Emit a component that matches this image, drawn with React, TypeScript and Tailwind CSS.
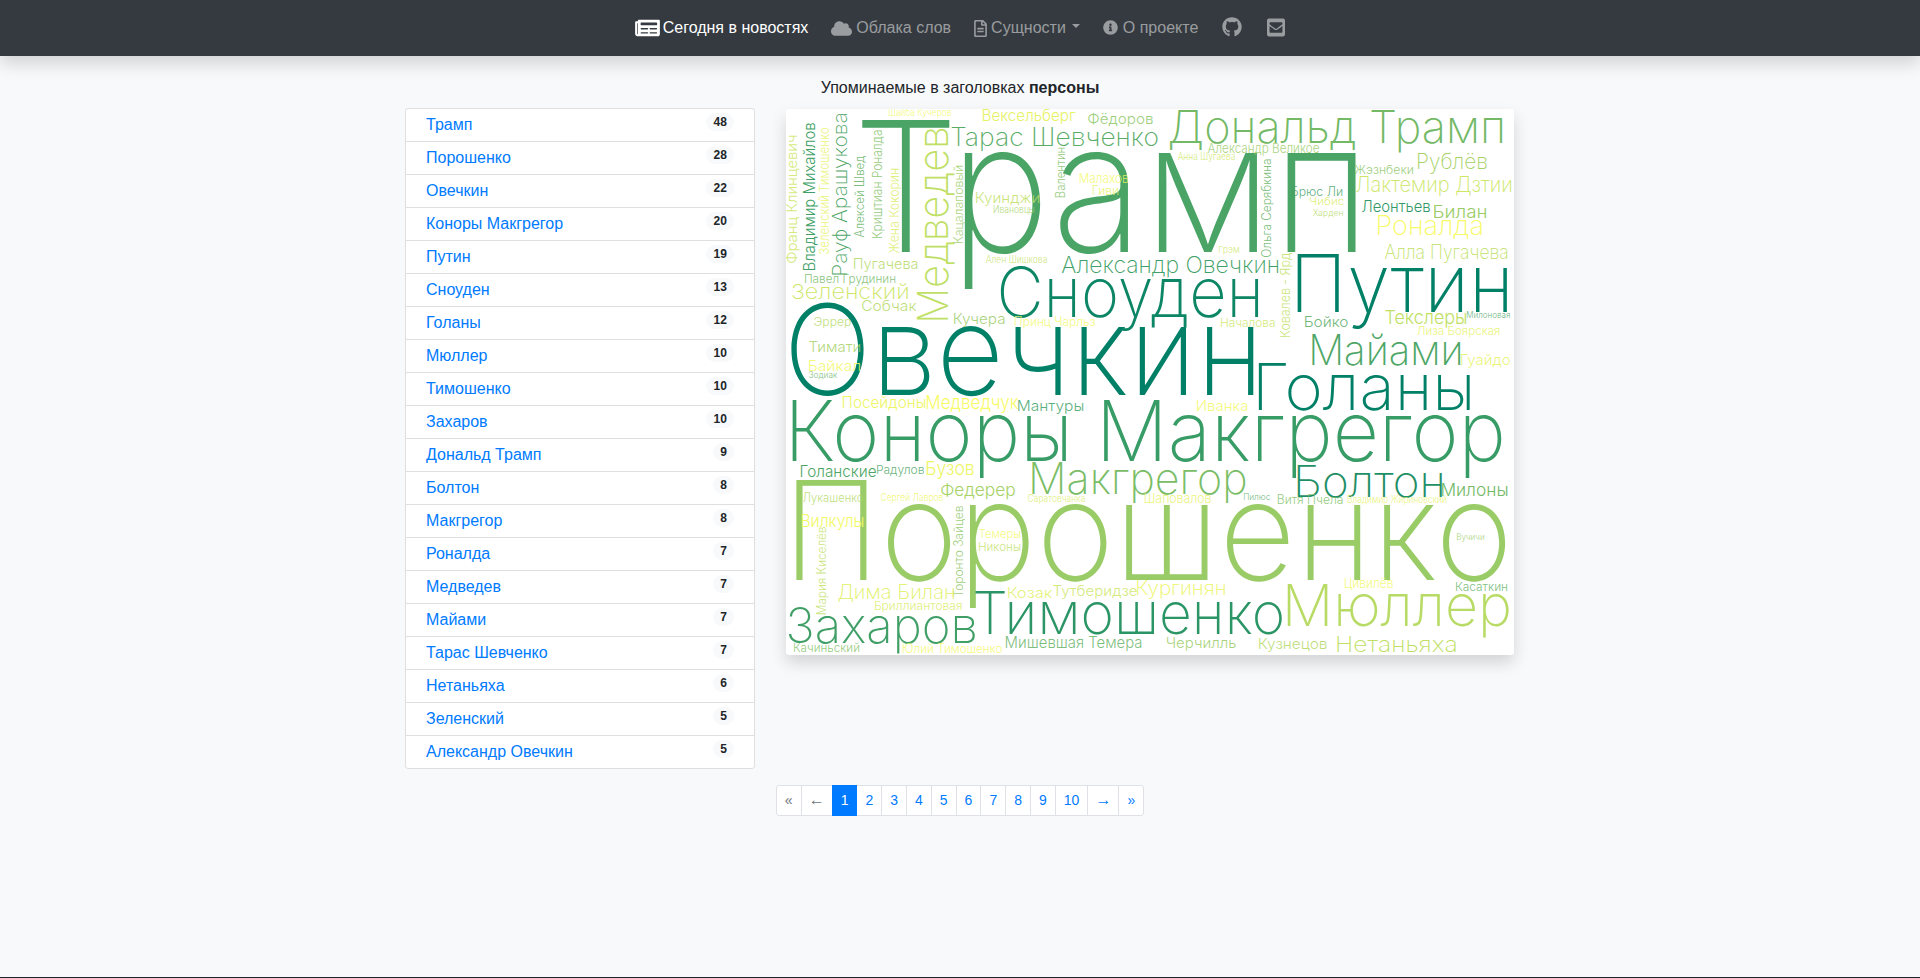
import React from "react";
import { FaNewspaper, FaCloud, FaRegFileAlt, FaInfoCircle, FaGithub, FaEnvelopeSquare } from "react-icons/fa";

const people: [string, number][] = [
  ["Трамп", 48], ["Порошенко", 28], ["Овечкин", 22], ["Коноры Макгрегор", 20], ["Путин", 19],
  ["Сноуден", 13], ["Голаны", 12], ["Мюллер", 10], ["Тимошенко", 10], ["Захаров", 10],
  ["Дональд Трамп", 9], ["Болтон", 8], ["Макгрегор", 8], ["Роналда", 7], ["Медведев", 7],
  ["Майами", 7], ["Тарас Шевченко", 7], ["Нетаньяха", 6], ["Зеленский", 5], ["Александр Овечкин", 5],
];

// text, x, baseline, size, length, t (summer colormap position), vertical
type W = [string, number, number, number, number, number, boolean?];
const words: W[] = [
  ["Трамп", 858, 252, 185, 497, 0.29],
  ["Овечкин", 790, 395, 128, 463, 0],
  ["Порошенко", 795, 580, 140, 713, 0.6],
  ["Коноры Макгрегор", 792, 461, 85, 711, 0.22],
  ["Сноуден", 1000, 317, 70, 258, 0.05],
  ["Путин", 1297, 312, 82, 210, 0],
  ["Голаны", 1258, 410, 66, 212, 0],
  ["Тимошенко", 974, 634, 60, 309, 0.17],
  ["Захаров", 788, 643, 50, 188, 0.25],
  ["Мюллер", 1287, 626, 59, 223, 0.72],
  ["Макгрегор", 1032, 494, 44, 214, 0.48],
  ["Болтон", 1297, 497, 44, 145, 0.12],
  ["Майами", 1312, 365, 43, 148, 0.3],
  ["Дональд Трамп", 1169, 143, 46, 333, 0.45],
  ["Тарас Шевченко", 951, 146, 26, 207, 0.35],
  ["Медведев", 948, 320, 43, 192, 0.75, true],
  ["Рауф Арашукова", 847, 275, 20, 162, 0.3, true],
  ["Владимир Михайлов", 815, 270, 16, 147, 0.25, true],
  ["Франц Клинцевич", 797, 263, 15, 128, 0.8, true],
  ["Зеленский Тимошенко", 829, 254, 13.5, 126, 0.9, true],
  ["Алексей Швед", 864, 237, 13, 81, 0.4, true],
  ["Криштиан Роналда", 882, 238, 13.5, 108, 0.5, true],
  ["Жена Кокорин", 899, 253, 13.5, 84, 0.85, true],
  ["Кацалаповый", 963, 243, 13, 77, 0.6, true],
  ["Валентин", 1065, 197, 13, 49, 0.5, true],
  ["Шайба Кучеров", 889, 116, 10, 62, 0.95],
  ["Вексельберг", 983, 121, 16, 92, 0.9],
  ["Фёдоров", 1088, 124, 15, 65, 0.55],
  ["Куинджи", 976, 203, 15, 63, 0.75],
  ["Ивановцы", 994, 213, 10, 40, 0.65],
  ["Малахов", 1080, 183, 13.5, 48, 0.95],
  ["Гиви", 1093, 195, 13, 25, 0.9],
  ["Ален Шишкова", 986, 263, 10, 61, 0.75],
  ["Александр Овечкин", 1062, 273, 23, 216, 0.25],
  ["Пугачева", 854, 269, 15, 64, 0.7],
  ["Павел Грудинин", 805, 283, 12, 90, 0.45],
  ["Зеленский", 792, 299, 21, 116, 0.8],
  ["Собчак", 862, 311, 15, 54, 0.7],
  ["Эррер", 814, 326, 12, 37, 0.7],
  ["Кучера", 954, 324, 15, 51, 0.6],
  ["Принц Чарльз", 1015, 326, 13, 80, 0.95],
  ["Александр Великое", 1208, 153, 14, 111, 0.6],
  ["Анна Шугаева", 1178, 160, 10.5, 57, 0.8],
  ["Рублёв", 1418, 169, 22, 69, 0.65],
  ["Жэзнбеки", 1355, 174, 12, 58, 0.55],
  ["Лактемир Дзтии", 1356, 192, 22, 155, 0.8],
  ["Брюс Ли", 1292, 196, 13, 50, 0.25],
  ["Чибис", 1310, 205, 11, 34, 0.85],
  ["Харден", 1313, 216, 9, 30, 0.7],
  ["Леонтьев", 1362, 212, 16, 68, 0.2],
  ["Билан", 1434, 218, 17, 52, 0.6],
  ["Роналда", 1378, 235, 27, 105, 0.97],
  ["Алла Пугачева", 1385, 259, 20, 123, 0.75],
  ["Грэм", 1219, 253, 9.5, 20, 0.8],
  ["Ольга Серябкина", 1271, 257, 13, 98, 0.4, true],
  ["Ковалев - Ярд", 1290, 337, 13.5, 84, 0.75, true],
  ["Началова", 1221, 327, 12.5, 54, 0.8],
  ["Бойко", 1305, 327, 15, 43, 0.35],
  ["Текслеры", 1385, 324, 19, 81, 0.75],
  ["Милоновая", 1467, 318, 9, 43, 0.3],
  ["Лиза Боярская", 1417, 335, 12.5, 83, 0.9],
  ["Гуайдо", 1461, 365, 15, 49, 0.9],
  ["Иванка", 1197, 411, 15, 51, 0.95],
  ["Милоны", 1442, 496, 18, 65, 0.45],
  ["Шаповалов", 1145, 503, 13.5, 66, 0.9],
  ["Пилюс", 1244, 500, 9, 26, 0.35],
  ["Витя Пчела", 1278, 504, 13, 65, 0.5],
  ["Владимир Жириновский", 1348, 503, 10, 98, 0.9],
  ["Вучичи", 1457, 540, 9, 27, 0.6],
  ["Тимати", 809, 352, 15, 51, 0.65],
  ["Байкал", 809, 371, 15, 51, 0.95],
  ["Зодиак", 809, 378, 9, 28, 0.4],
  ["Посейдоны", 843, 408, 16, 82, 0.93],
  ["Медведчук", 927, 409, 19, 91, 0.97],
  ["Мантуры", 1018, 411, 15, 65, 0.25],
  ["Голанские", 801, 477, 16, 75, 0.3],
  ["Радулов", 877, 474, 12.5, 47, 0.3],
  ["Бузов", 927, 475, 19, 47, 0.93],
  ["Федерер", 941, 496, 17.5, 74, 0.65],
  ["Лукашенко", 803, 502, 13, 60, 0.7],
  ["Сергей Лавров", 881, 501, 10.5, 62, 0.93],
  ["Саратовчанка", 1028, 502, 10, 57, 0.85],
  ["Вилкулы", 802, 527, 17, 61, 0.95],
  ["Мария Киселёв", 826, 614, 13, 87, 0.75, true],
  ["Торонто Зайцев", 963, 597, 13, 91, 0.55, true],
  ["Темеры", 979, 538, 12.5, 41, 0.95],
  ["Никоны", 979, 551, 12.5, 41, 0.75],
  ["Дима Билан", 838, 599, 20, 116, 0.88],
  ["Козак", 1008, 598, 15, 44, 0.88],
  ["Тутберидзе", 1053, 596, 15, 84, 0.8],
  ["Кургинян", 1137, 595, 20, 88, 0.92],
  ["Бриллиантовая", 875, 610, 12.5, 87, 0.85],
  ["Мишевшая Темера", 1006, 648, 15.5, 136, 0.4],
  ["Качиньский", 794, 652, 12, 65, 0.5],
  ["Юлий Тимошенко", 903, 653, 13, 99, 0.95],
  ["Черчилль", 1167, 648, 15, 69, 0.6],
  ["Кузнецов", 1259, 649, 15, 68, 0.7],
  ["Нетаньяха", 1337, 652, 22, 120, 0.75],
  ["Цивилёв", 1345, 588, 13.5, 48, 0.95],
  ["Касаткин", 1456, 591, 12.5, 51, 0.4],
];

const shade = (t: number) =>
  `rgb(${Math.round(t * 255)},${Math.round((0.5 + 0.5 * t) * 255)},102)`;

// The measured boxes are of the ink; the glyphs have side bearings beyond it.
const leftBearing = (s: string) =>
  "ПКГБМРНВЕШЧЦИЮ".includes(s[0]) ? 0.09 : "ОСЗЭФ".includes(s[0]) ? 0.05 : 0.03;
const rightBearing = (s: string) =>
  "пнимыцшлй".includes(s[s.length - 1]) ? 0.085 : 0.035;

function WordCloud() {
  return (
    <svg
      viewBox="786 109 728 546"
      className="mt-px block h-[546px] w-[728px] rounded-[3px] bg-white shadow-[0_8px_16px_rgba(0,0,0,0.15)]"
      style={{ fontFamily: "Inter, 'Liberation Sans', sans-serif" }}
    >
      {words.map(([text, x, y, size, len, t, vertical]) => {
        const l = leftBearing(text) * size;
        const r = rightBearing(text) * size;
        const px = vertical ? x : x - l;
        const py = vertical ? y + l : y;
        return (
          <text
            key={text + x}
            x={px}
            y={py}
            fontSize={size * 0.98}
            fontWeight={size < 20 ? 300 : 250}
            fill={shade(t)}
            fillOpacity={size < 16 ? 0.85 : 1}
            textLength={len + l + r}
            lengthAdjust="spacingAndGlyphs"
            transform={vertical ? `rotate(-90 ${px} ${py})` : undefined}
          >
            {text}
          </text>
        );
      })}
    </svg>
  );
}

const pages = ["«", "←", "1", "2", "3", "4", "5", "6", "7", "8", "9", "10", "→", "»"];

export default function App() {
  return (
    <div className="flex min-h-screen flex-col bg-[#f8f9fa] text-[16px] text-[#212529] font-['Liberation_Sans',Arial,sans-serif]">
      <header className="relative z-10 h-14 bg-[#343a40] shadow-[0_8px_16px_rgba(0,0,0,0.15)]">
        <nav className="flex h-full items-center justify-center text-[rgba(255,255,255,0.5)]">
          <a className="flex items-center gap-[3px] text-white">
            <FaNewspaper className="h-[22px] w-[25px]" />
            Сегодня в новостях
          </a>
          <a className="ml-[23px] flex items-center gap-[4px]">
            <FaCloud className="h-[17px] w-[21px]" />
            Облака слов
          </a>
          <a className="ml-[23px] flex items-center gap-[4px]">
            <FaRegFileAlt className="h-[17px] w-[13px]" />
            Сущности
            <span className="mb-[4px] ml-[2px] h-0 w-0 border-x-[4.8px] border-t-[4.8px] border-x-transparent border-t-[rgba(255,255,255,0.5)]" />
          </a>
          <a className="ml-[23px] flex items-center gap-[5px]">
            <FaInfoCircle className="mb-[2px] h-[15px] w-[15px]" />
            О проекте
          </a>
          <a className="ml-[24px]">
            <FaGithub className="mb-[2px] h-[20px] w-[20px]" />
          </a>
          <a className="ml-[25px]">
            <FaEnvelopeSquare className="mb-[2px] h-[21px] w-[18px]" />
          </a>
        </nav>
      </header>

      <main className="mx-auto w-[1140px] flex-1">
        <h2 className="mt-[20px] h-[32px] text-center text-[16px] leading-[24px] font-normal">
          Упоминаемые в заголовках <b className="font-bold">персоны</b>
        </h2>
        <div className="flex items-start gap-[31px] px-[15px]">
          <ul className="w-[350px] rounded-[3px] border border-[#dfdfdf] bg-white">
            {people.map(([name, n], i) => (
              <li
                key={name}
                className={
                  "flex items-start justify-between pr-[20px] pl-[20px] " +
                  (i < people.length - 1 ? "h-[33px] border-b border-[#dfdfdf]" : "h-[32px]")
                }
              >
                <a className="pt-[4px] leading-[24px] text-[#007bff]">{name}</a>
                <span className="mt-[4px] rounded-full bg-[#f8f9fa] px-[7.2px] py-[3px] text-[12px] leading-[12px] font-bold">
                  {n}
                </span>
              </li>
            ))}
          </ul>
          <WordCloud />
        </div>
        <ul className="mt-[16px] flex justify-center text-[14px]">
          {pages.map((p, i) => {
            const arrow = p === "←" || p === "→";
            return (
              <li
                key={p}
                className={
                  "flex h-[31px] items-center border " +
                  (arrow ? "w-[32px] justify-center pb-[2px] text-[16px] leading-none " : "px-[8px] ") +
                  (i > 0 ? "-ml-px " : "") +
                  (p === "1"
                    ? "z-10 border-[#007bff] bg-[#007bff] text-white"
                    : "border-[#dee2e6] bg-white " + (i < 2 ? "text-[#6c757d]" : "text-[#007bff]")) +
                  (i === 0 ? " rounded-l-[3px]" : "") +
                  (i === pages.length - 1 ? " rounded-r-[3px]" : "")
                }
              >
                {p}
              </li>
            );
          })}
        </ul>
      </main>
      <footer className="h-px bg-[#212529]" />
    </div>
  );
}
